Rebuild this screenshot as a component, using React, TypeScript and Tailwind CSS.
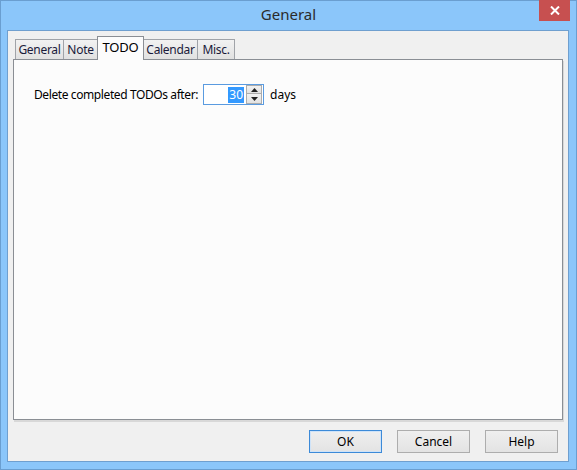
import React from 'react';

const font = { fontFamily: '"Noto Sans", "Open Sans", sans-serif' };

interface TabProps {
    label: string;
    width: string;
    selected?: boolean;
}

const Tab: React.FC<TabProps> = ({ label, width, selected }) => {
    if (selected) {
        return (
            <div
                className={`${width} h-[24px] -mx-[1px] relative z-10 bg-[#fcfcfc] border border-[#8a8e94] border-b-0 flex items-start justify-center pt-[1px] text-[13px] text-black tracking-[-0.2px]`}
            >
                {label}
            </div>
        );
    }
    return (
        <div
            className={`${width} h-[21px] mt-[2px] border border-[#a0a3a8] border-b-0 bg-gradient-to-b from-[#f2f2f2] to-[#e0e0e0] flex items-center justify-center text-[12px] text-[#1a1a3a] tracking-[-0.3px] [&+&]:border-l-0`}
        >
            {label}
        </div>
    );
};

const DlgButton: React.FC<{ label: string; focused?: boolean }> = ({ label, focused }) => (
    <button
        className={`w-[73px] h-[23px] text-[12px] text-black bg-gradient-to-b from-[#efefef] to-[#e3e3e3] border ${
            focused ? 'border-[#3c8ad8] shadow-[inset_0_0_0_1px_#cfe3f8]' : 'border-[#adadad]'
        }`}
    >
        {label}
    </button>
);

const App: React.FC = () => {
    return (
        <div className="w-[577px] h-[470px] bg-[#8bc6fa] border border-[#6a9ed0] flex flex-col" style={font}>
            {/* title bar */}
            <div className="h-[29px] relative flex items-center justify-center">
                <span className="text-[15px] text-[#2a2a2a] -mt-[3px]">General</span>
                <div className="absolute top-[-1px] right-[6px] w-[31px] h-[21px] bg-[#c75050] flex items-center justify-center">
                    <svg width="10" height="9" viewBox="0 0 10 9">
                        <path d="M1 0.5 L9 8.5 M9 0.5 L1 8.5" stroke="white" strokeWidth="2" />
                    </svg>
                </div>
            </div>

            {/* client area */}
            <div className="ml-[6px] mr-[7px] mb-[7px] flex-1 bg-[#f0f0f0] border border-[#6f9fcf] flex flex-col">
                <div className="pt-[6px] pl-[7px] flex items-end h-[29px]">
                    <Tab label="General" width="w-[49px]" />
                    <Tab label="Note" width="w-[34px]" />
                    <Tab label="TODO" width="w-[47px]" selected />
                    <Tab label="Calendar" width="w-[55px]" />
                    <Tab label="Misc." width="w-[37px]" />
                </div>

                <div className="ml-[5px] w-[550px] h-[361px] -mt-[1px] bg-[#fcfcfc] border border-[#8a8e94] shadow-[1px_2px_0_#d8d8d8]">
                    <div className="pt-[24px] pl-[20px] flex items-center text-[12px] text-black">
                        <span className="tracking-[-0.4px]">Delete completed TODOs after:</span>
                        <div className="ml-[5px] w-[61px] h-[21px] border border-[#5a9be0] bg-white flex items-center">
                            <div className="flex-1 flex justify-end pr-[2px]">
                                <span className="bg-[#3399ff] text-white px-[1px] leading-[16px]">30</span>
                            </div>
                            <div className="w-[16px] h-[19px] flex flex-col mr-[1px]">
                                <div className="h-[9px] border border-[#acacac] bg-gradient-to-b from-[#f2f2f2] to-[#e2e2e2] flex items-center justify-center">
                                    <svg width="7" height="4" viewBox="0 0 7 4">
                                        <path d="M0 4 L3.5 0 L7 4 Z" fill="#222" />
                                    </svg>
                                </div>
                                <div className="h-[10px] border border-t-0 border-[#acacac] bg-gradient-to-b from-[#f2f2f2] to-[#e2e2e2] flex items-center justify-center">
                                    <svg width="7" height="4" viewBox="0 0 7 4">
                                        <path d="M0 0 L3.5 4 L7 0 Z" fill="#222" />
                                    </svg>
                                </div>
                            </div>
                        </div>
                        <span className="ml-[6px]">days</span>
                    </div>
                </div>

                <div className="flex justify-end gap-[15px] pr-[10px] mt-[10px]">
                    <DlgButton label="OK" focused />
                    <DlgButton label="Cancel" />
                    <DlgButton label="Help" />
                </div>
            </div>
        </div>
    );
};

export default App;
